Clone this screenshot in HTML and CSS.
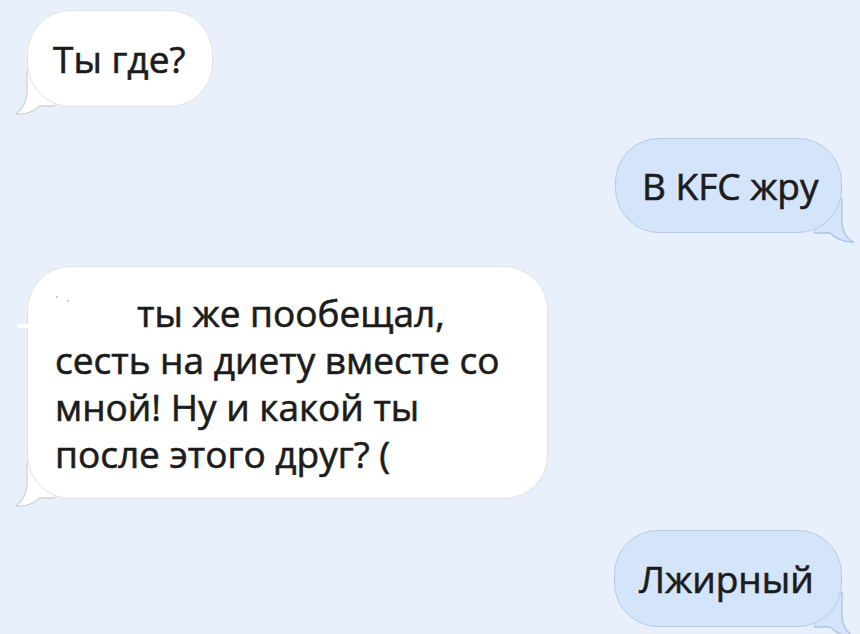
FILE: index.html
```html
<!DOCTYPE html>
<html lang="ru">

<head>
    <meta charset="UTF-8">
    <meta name="viewport" content="width=device-width, initial-scale=1.0">
    <title>Чат</title>
    <link rel="stylesheet" href="styles.css">
</head>

<body>
    <div class="chat">
        <!-- входящее -->
        <div class="msg in msg-1">
            Ты где?
            <svg class="tail" viewBox="0 0 40 45" width="40" height="45">
                <path d="M40 0 H12 V22 C12 32 7 39 1 44 C11 45 19 41 25 36 L40 36 Z" />
            </svg>
        </div>

        <!-- исходящее -->
        <div class="msg out msg-2">
            В KFC жру
            <svg class="tail" viewBox="0 0 40 45" width="40" height="45">
                <path d="M0 0 H28 V24 C28 33 33 40 39 44 C30 44 22 41 16 35 L0 35 Z" />
            </svg>
        </div>

        <div class="msg in msg-3">
            <span class="erase"></span>
            <span class="dot d1"></span>
            <span class="dot d2"></span>
            <p class="text">ты же пообещал,<br>сесть на диету вместе со<br>мной! Ну и какой ты<br>после этого друг? (</p>
            <svg class="tail" viewBox="0 0 40 45" width="40" height="45">
                <path d="M40 0 H12 V22 C12 32 7 39 1 44 C11 45 19 41 25 36 L40 36 Z" />
            </svg>
        </div>

        <div class="msg out msg-4">
            Лжирный
            <svg class="tail" viewBox="0 0 40 45" width="40" height="45">
                <path d="M0 0 H28 V24 C28 33 33 40 39 44 C30 44 22 41 16 35 L0 35 Z" />
            </svg>
        </div>
    </div>
</body>

</html>
```

FILE: styles.css
```css
* {
    box-sizing: border-box;
}

body {
    margin: 0;
    height: 634px;
    overflow: hidden;
    background: #e8f1fb;
    font-family: 'Open Sans', 'Noto Sans', sans-serif;
    color: #1c1c1c;
}

.chat {
    display: flex;
    flex-direction: column;
    padding: 10px 18px 0 27px;
}

.msg {
    position: relative;
    font-size: 37px;
    line-height: 47px;
    -webkit-text-stroke: 0.6px #1c1c1c;
    border-radius: 44px;
    white-space: nowrap;
}

.msg .tail {
    position: absolute;
    bottom: -9px;
    z-index: -1;
}

/* белые — слева */
.in {
    align-self: flex-start;
    background: #fff;
    border: 1px solid #dfe3e8;
}

.in .tail {
    left: -13px;
}

.in .tail path {
    fill: #fff;
    stroke: #cdd2d8;
    stroke-width: 1.3;
}

/* голубые — справа */
.out {
    align-self: flex-end;
    background: #d4e4fb;
    border: 1px solid #b7cbe8;
}

.out .tail {
    right: -13px;
    bottom: -11px;
}

.out .tail path {
    fill: #d4e4fb;
    stroke: #adc2e0;
    stroke-width: 1.3;
}

.msg-1 {
    width: 186px;
    height: 97px;
    padding: 24px 0 0 25px;
}

.msg-2 {
    margin-top: 31px;
    width: 227px;
    height: 95px;
    padding: 23px 0 0 26px;
}

.msg-3 {
    margin-top: 33px;
    width: 521px;
    height: 233px;
    padding: 22px 0 0 27px;
}

.msg-4 {
    margin-top: 31px;
    width: 228px;
    height: 97px;
    padding: 24px 0 0 24px;
}

.text {
    margin: 0;
    text-indent: 82px;
}

/* стёртое имя */
.erase {
    position: absolute;
    left: -10px;
    top: 57px;
    width: 14px;
    height: 4px;
    background: #fff;
}

.dot {
    position: absolute;
    width: 2px;
    height: 2px;
    background: #c9cdd3;
}

.d1 {
    left: 28px;
    top: 29px;
}

.d2 {
    left: 39px;
    top: 33px;
}
```
